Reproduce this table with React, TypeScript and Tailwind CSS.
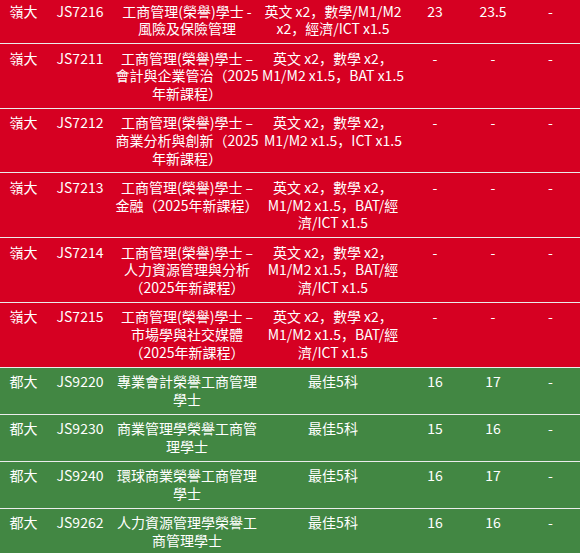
import React from "react";

type Row = {
  u: string;
  code: string;
  name: string[];
  req: string[];
  a: string;
  b: string;
  c: string;
  green?: boolean;
};

const req3 = ["英文 x2，數學 x2，", "M1/M2 x1.5，BAT/經", "濟/ICT x1.5"];

const rows: Row[] = [
  { u: "嶺大", code: "JS7216", name: ["工商管理(榮譽)學士 -", "風險及保險管理"], req: ["英文 x2，數學/M1/M2", "x2，經濟/ICT x1.5"], a: "23", b: "23.5", c: "-" },
  { u: "嶺大", code: "JS7211", name: ["工商管理(榮譽)學士 –", "會計與企業管治（2025", "年新課程）"], req: ["英文 x2，數學 x2，", "M1/M2 x1.5，BAT x1.5"], a: "-", b: "-", c: "-" },
  { u: "嶺大", code: "JS7212", name: ["工商管理(榮譽)學士 –", "商業分析與創新（2025", "年新課程）"], req: ["英文 x2，數學 x2，", "M1/M2 x1.5，ICT x1.5"], a: "-", b: "-", c: "-" },
  { u: "嶺大", code: "JS7213", name: ["工商管理(榮譽)學士 –", "金融（2025年新課程）"], req: req3, a: "-", b: "-", c: "-" },
  { u: "嶺大", code: "JS7214", name: ["工商管理(榮譽)學士 –", "人力資源管理與分析", "（2025年新課程）"], req: req3, a: "-", b: "-", c: "-" },
  { u: "嶺大", code: "JS7215", name: ["工商管理(榮譽)學士 –", "市場學與社交媒體", "（2025年新課程）"], req: req3, a: "-", b: "-", c: "-" },
  { u: "都大", code: "JS9220", name: ["專業會計榮譽工商管理", "學士"], req: ["最佳5科"], a: "16", b: "17", c: "-", green: true },
  { u: "都大", code: "JS9230", name: ["商業管理學榮譽工商管", "理學士"], req: ["最佳5科"], a: "15", b: "16", c: "-", green: true },
  { u: "都大", code: "JS9240", name: ["環球商業榮譽工商管理", "學士"], req: ["最佳5科"], a: "16", b: "17", c: "-", green: true },
  { u: "都大", code: "JS9262", name: ["人力資源管理學榮譽工", "商管理學士"], req: ["最佳5科"], a: "16", b: "16", c: "-", green: true },
];

function Lines({ lines }: { lines: string[] }) {
  return (
    <div className="flex flex-col items-center">
      {lines.map((l, i) => (
        <span key={i} className="whitespace-nowrap">
          {l}
        </span>
      ))}
    </div>
  );
}

export default function App() {
  return (
    <div
      className="w-[580px] h-[553px] overflow-hidden bg-[#428743]"
      style={{ fontFamily: '"Noto Sans CJK SC", "Noto Sans CJK TC", sans-serif' }}
    >
      <div className="-mt-[3px] flex flex-col text-[14px] leading-[17.7px] text-white">
        {rows.map((r) => (
          <div
            key={r.code}
            className={`grid grid-cols-[47px_66px_148px_144px_60px_56px_59px] border-b border-[#ececec] pt-[5.5px] pb-[5.1px] text-center ${
              r.green ? "bg-[#428743]" : "bg-[#d60022]"
            }`}
          >
            <div>{r.u}</div>
            <div>{r.code}</div>
            <Lines lines={r.name} />
            <Lines lines={r.req} />
            <div>{r.a}</div>
            <div>{r.b}</div>
            <div>{r.c}</div>
          </div>
        ))}
      </div>
    </div>
  );
}
